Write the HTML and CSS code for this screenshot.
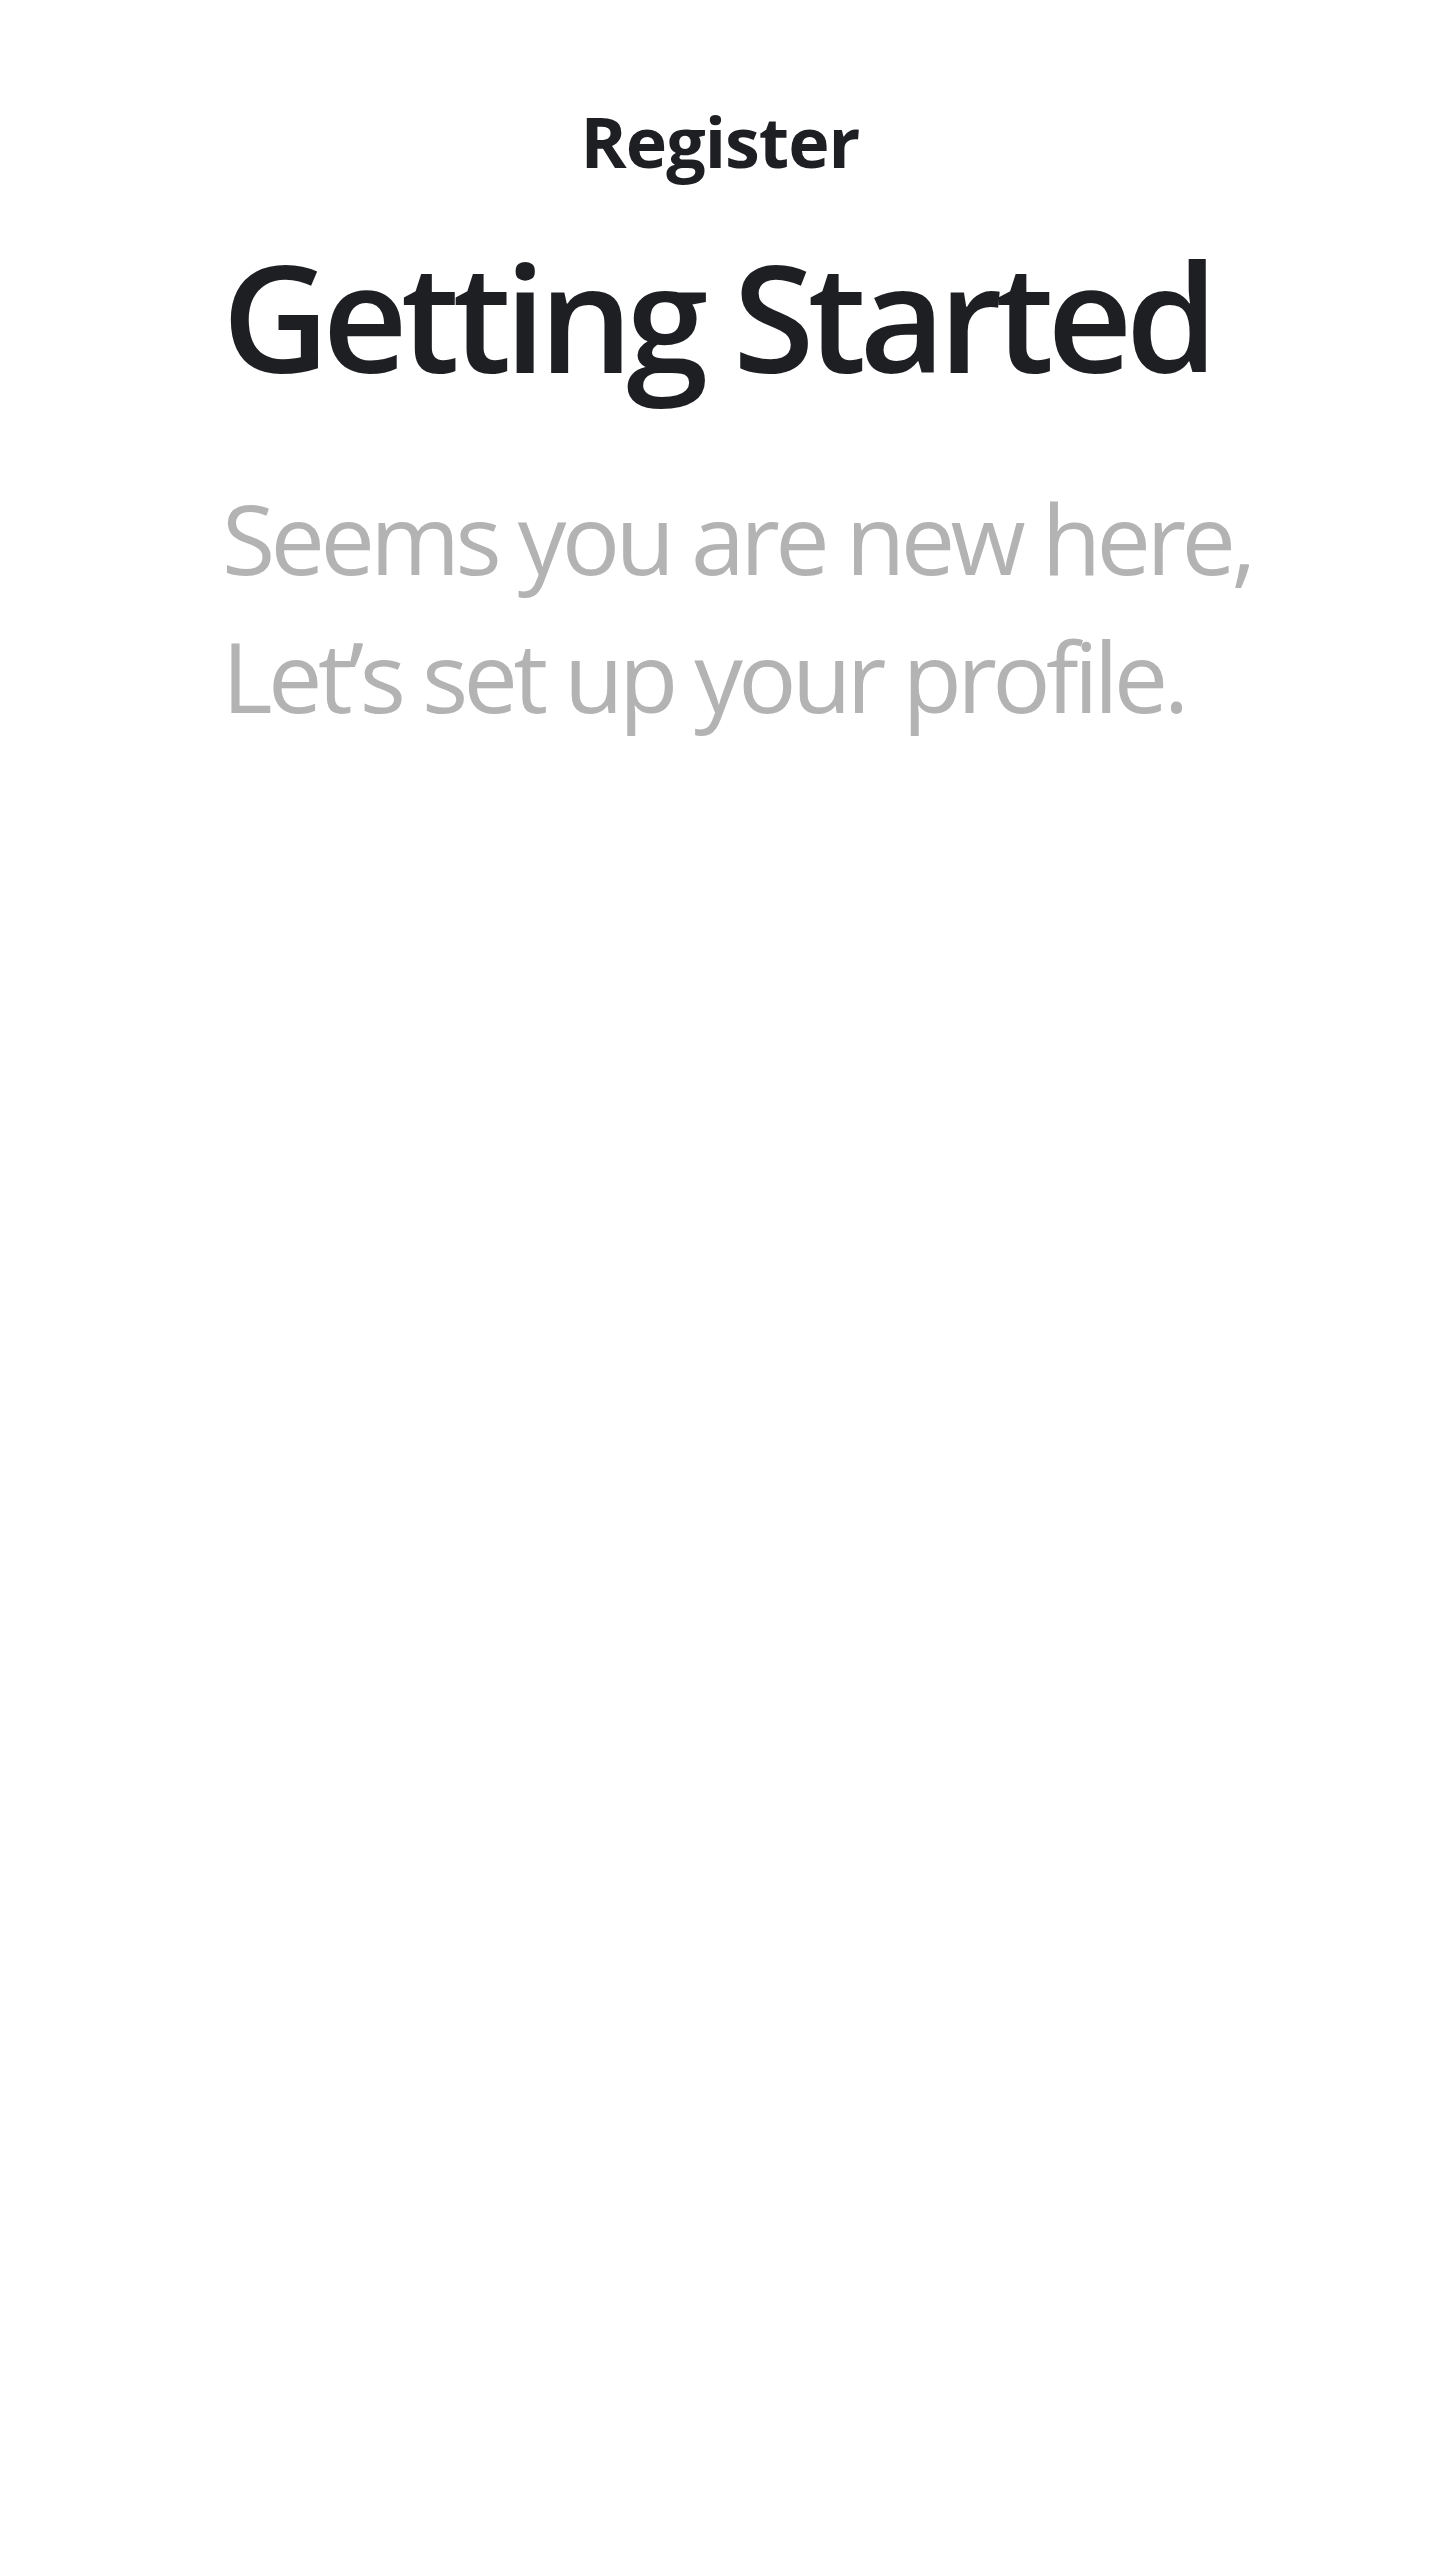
FILE: index.html
```html
<!DOCTYPE html>
<html lang="en">
<head>
<meta charset="utf-8">
<title>Register</title>
<link rel="stylesheet" href="styles.css">
</head>
<body>
<main class="page">
  <header class="topbar">
    <h2 class="topbar-title">Register</h2>
  </header>
  <section class="intro">
    <h1 class="intro-title">Getting Started</h1>
    <p class="intro-text">Seems you are new here,<br>Let’s set up your profile.</p>
  </section>
</main>
</body>
</html>
```

FILE: styles.css
```css
html, body {
  margin: 0;
  padding: 0;
  background: #ffffff;
}
body {
  font-family: "Open Sans", "Noto Sans", sans-serif;
  color: #1e1f23;
}
.page {
  min-height: 2560px;
  padding-top: 106px;
  box-sizing: border-box;
}
.topbar {
  display: flex;
  justify-content: center;
}
.topbar-title {
  margin: 0;
  font-size: 70px;
  line-height: 70px;
  font-weight: 700;
  letter-spacing: -1px;
  color: #1e1f23;
}
.intro {
  padding: 66px 0 0 222px;
}
.intro-title {
  margin: 0;
  font-size: 148px;
  line-height: 148px;
  font-weight: 600;
  letter-spacing: -6.8px;
  color: #1e1f23;
}
.intro-text {
  margin: 78px 0 0;
  font-size: 97px;
  line-height: 138px;
  font-weight: 400;
  letter-spacing: -4.6px;
  color: #b3b3b3;
}
```
